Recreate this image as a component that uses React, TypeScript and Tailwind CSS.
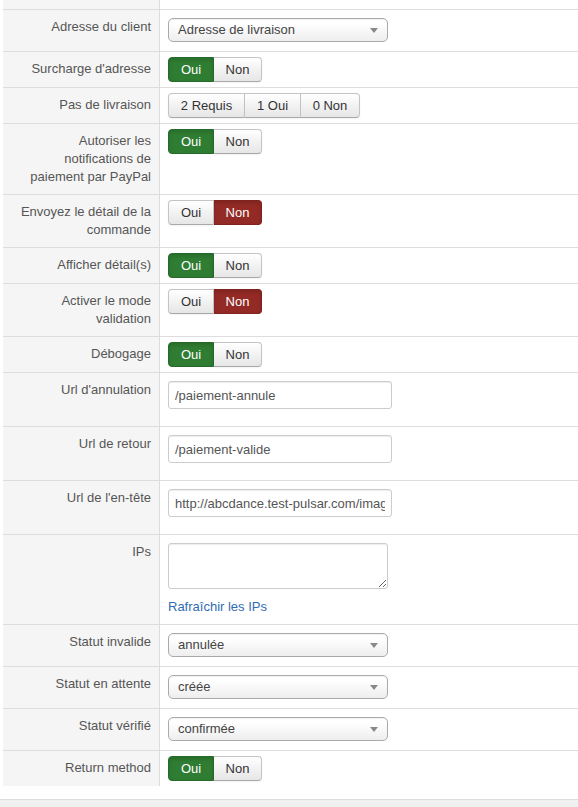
import React from "react";

type Toggle = { kind: "toggle"; value: "oui" | "non" };
type Triple = { kind: "triple" };
type Select = { kind: "select"; value: string };
type Input = { kind: "input"; value: string };
type Ips = { kind: "ips" };
type Field = Toggle | Triple | Select | Input | Ips;

const rows: { label: string; field: Field }[] = [
  { label: "Adresse du client", field: { kind: "select", value: "Adresse de livraison" } },
  { label: "Surcharge d'adresse", field: { kind: "toggle", value: "oui" } },
  { label: "Pas de livraison", field: { kind: "triple" } },
  { label: "Autoriser les notifications de paiement par PayPal", field: { kind: "toggle", value: "oui" } },
  { label: "Envoyez le détail de la commande", field: { kind: "toggle", value: "non" } },
  { label: "Afficher détail(s)", field: { kind: "toggle", value: "oui" } },
  { label: "Activer le mode validation", field: { kind: "toggle", value: "non" } },
  { label: "Débogage", field: { kind: "toggle", value: "oui" } },
  { label: "Url d'annulation", field: { kind: "input", value: "/paiement-annule" } },
  { label: "Url de retour", field: { kind: "input", value: "/paiement-valide" } },
  { label: "Url de l'en-tête", field: { kind: "input", value: "http://abcdance.test-pulsar.com/images/logo.png" } },
  { label: "IPs", field: { kind: "ips" } },
  { label: "Statut invalide", field: { kind: "select", value: "annulée" } },
  { label: "Statut en attente", field: { kind: "select", value: "créée" } },
  { label: "Statut vérifié", field: { kind: "select", value: "confirmée" } },
  { label: "Return method", field: { kind: "toggle", value: "oui" } },
];

const plainBtn =
  "h-[25px] flex items-center justify-center whitespace-nowrap border border-[#c4c4c4] border-b-[#a8a8a8] bg-gradient-to-b from-white to-[#e6e6e6] text-[#333] shadow-[inset_0_1px_0_rgba(255,255,255,0.3),0_1px_2px_rgba(0,0,0,0.05)]";

function YesNo({ value }: { value: "oui" | "non" }) {
  const yesOn = value === "oui";
  return (
    <div className="flex">
      <div
        className={
          yesOn
            ? "h-[25px] flex items-center justify-center w-[46px] rounded-l-[4px] border border-[#266a29] bg-[#2f7d32] text-white shadow-[inset_0_2px_4px_rgba(0,0,0,0.15)]"
            : plainBtn + " w-[46px] rounded-l-[4px]"
        }
      >
        Oui
      </div>
      <div
        className={
          !yesOn
            ? "h-[25px] flex items-center justify-center w-[48px] rounded-r-[4px] border border-[#7f231f] border-l-0 bg-[#942a25] text-white shadow-[inset_0_2px_4px_rgba(0,0,0,0.15)]"
            : plainBtn + " w-[48px] rounded-r-[4px] border-l-0"
        }
      >
        Non
      </div>
    </div>
  );
}

function Steps() {
  return (
    <div className="flex">
      <div className={plainBtn + " w-[77px] rounded-l-[4px]"}>2 Requis</div>
      <div className={plainBtn + " w-[56px] border-l-0"}>1 Oui</div>
      <div className={plainBtn + " w-[59px] border-l-0 rounded-r-[4px]"}>0 Non</div>
    </div>
  );
}

function FakeSelect({ value }: { value: string }) {
  return (
    <div className="mt-[3px] mb-[4px] w-[220px] h-[24px] flex items-center justify-between pl-[9px] pr-[9px] rounded-[5px] border border-[#aaa] bg-gradient-to-b from-white from-20% to-[#eeeeee] text-[#444] shadow-[0_0_3px_rgba(255,255,255,1),inset_0_1px_1px_rgba(0,0,0,0.06)]">
      <span>{value}</span>
      <svg width="8" height="5" viewBox="0 0 8 5" className="mt-[1px]">
        <path d="M0 0 H8 L4 5 Z" fill="#888" />
      </svg>
    </div>
  );
}

function TextInput({ value }: { value: string }) {
  return (
    <input
      readOnly
      value={value}
      className="mt-[3px] mb-[12px] block w-[224px] h-[28px] px-[6px] rounded-[3px] border border-[#ccc] bg-white text-[#555] text-[13px] outline-none shadow-[inset_0_1px_1px_rgba(0,0,0,0.075)]"
    />
  );
}

function IpsField() {
  return (
    <div className="mt-[3px] mb-[3px]">
      <textarea
        readOnly
        className="block w-[220px] h-[46px] rounded-[3px] border border-[#ccc] bg-white shadow-[inset_0_1px_1px_rgba(0,0,0,0.075)] outline-none"
      />
      <div className="mt-[9px] leading-[18px] text-[#2f6db3]">Rafraîchir les IPs</div>
    </div>
  );
}

function FieldCell({ field }: { field: Field }) {
  switch (field.kind) {
    case "toggle":
      return <YesNo value={field.value} />;
    case "triple":
      return <Steps />;
    case "select":
      return <FakeSelect value={field.value} />;
    case "input":
      return <TextInput value={field.value} />;
    case "ips":
      return <IpsField />;
  }
}

export default function App() {
  return (
    <div className="w-[578px] min-h-[807px] bg-white font-['Liberation_Sans',Arial,sans-serif] text-[13px] leading-[18px] flex flex-col">
      <div className="pl-[3px]">
        <div className="flex h-[9px]">
          <div className="w-[157px] bg-[#f5f5f5] border-r border-[#dddddd]" />
        </div>
        {rows.map((r) => (
          <div key={r.label} className="flex border-t border-[#dddddd]">
            <div className="w-[157px] shrink-0 bg-[#f5f5f5] border-r border-[#dddddd] pt-[8px] pb-[8px] pl-[8px] pr-[8px] text-right text-[#555]">
              {r.label}
            </div>
            <div className="flex-1 pl-[8px] py-[5px]">
              <FieldCell field={r.field} />
            </div>
          </div>
        ))}
      </div>
      <div className="mt-[13px] flex-1 border-t border-[#dddddd] bg-[#f0f0f0]" />
    </div>
  );
}
